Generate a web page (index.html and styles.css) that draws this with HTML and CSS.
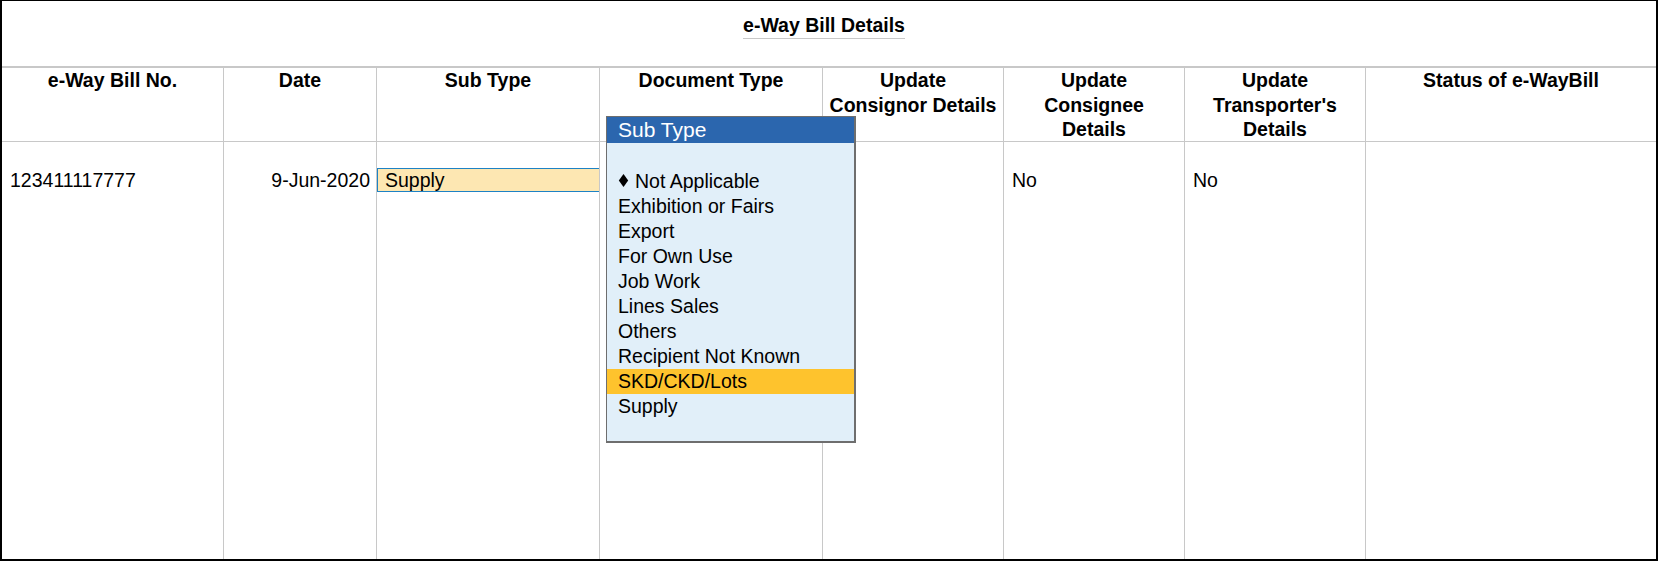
FILE: index.html
```html
<!DOCTYPE html>
<html lang="en">
<head>
    <meta charset="UTF-8">
    <title>e-Way Bill Details</title>
    <link rel="stylesheet" href="styles.css">
</head>
<body>

<div class="sheet">
    <div class="title-bar">
        <span class="title">e-Way Bill Details</span>
    </div>

    <div class="grid">
        <div class="head">e-Way Bill No.</div>
        <div class="head">Date</div>
        <div class="head">Sub Type</div>
        <div class="head">Document Type</div>
        <div class="head">Update<br>Consignor Details</div>
        <div class="head">Update<br>Consignee<br>Details</div>
        <div class="head">Update<br>Transporter's<br>Details</div>
        <div class="head last">Status of e-WayBill</div>

        <div class="cell">123411117777</div>
        <div class="cell right">9-Jun-2020</div>
        <div class="cell edit"><div class="field">Supply</div></div>
        <div class="cell"></div>
        <div class="cell"></div>
        <div class="cell">No</div>
        <div class="cell">No</div>
        <div class="cell last"></div>
    </div>

    <div class="picker">
        <div class="picker-title">Sub Type</div>
        <ul class="picker-list">
            <li><span class="mark"></span>Not Applicable</li>
            <li>Exhibition or Fairs</li>
            <li>Export</li>
            <li>For Own Use</li>
            <li>Job Work</li>
            <li>Lines Sales</li>
            <li>Others</li>
            <li>Recipient Not Known</li>
            <li class="selected">SKD/CKD/Lots</li>
            <li>Supply</li>
        </ul>
    </div>
</div>

</body>
</html>
```

FILE: styles.css
```css
body {
    margin: 0;
    padding: 0;
    font-family: "Liberation Sans", Arial, sans-serif;
    color: #000;
    background-color: #fff;
}

.sheet {
    position: relative;
    box-sizing: border-box;
    width: 1658px;
    height: 561px;
    border: 2px solid #000;
    border-top-width: 1px;
    display: flex;
    flex-direction: column;
}

.title-bar {
    height: 65px;
    padding-right: 10px;
    display: flex;
    justify-content: center;
    align-items: flex-start;
}

.title {
    margin-top: 12px;
    font-size: 19.5px;
    font-weight: bold;
    line-height: 25px;
    border-bottom: 1px solid #c8c8c8;
}

.grid {
    flex: 1;
    display: grid;
    grid-template-columns: 222px 153px 223px 223px 181px 181px 181px 1fr;
    grid-template-rows: 74px 1fr;
    border-top: 2px solid #c8c8c8;
    font-size: 19.5px;
    line-height: 25px;
}

.head {
    line-height: 24.5px;
    font-weight: bold;
    text-align: center;
    border-right: 1px solid #c8c8c8;
    border-bottom: 1px solid #c8c8c8;
}

.cell {
    padding: 26px 8px 0;
    border-right: 1px solid #c8c8c8;
}

.cell.right {
    text-align: right;
    padding-right: 6px;
}

.cell.edit {
    padding: 26px 0 0;
}

.head.last,
.cell.last {
    border-right: none;
}

.field {
    height: 22px;
    line-height: 22px;
    padding-left: 7px;
    background-color: #fde7b2;
    border: 1px solid #1d82c5;
    border-right: none;
}

.picker {
    position: absolute;
    left: 604px;
    top: 115px;
    width: 250px;
    height: 327px;
    box-sizing: border-box;
    background-color: #e1eff9;
    border: 1px solid #6e6e6e;
    border-right-width: 2px;
    border-bottom-width: 2px;
}

.picker-title {
    height: 26px;
    line-height: 26px;
    padding-left: 11px;
    font-size: 21px;
    color: #fff;
    background-color: #2b66ae;
}

.picker-list {
    list-style: none;
    margin: 0;
    padding: 25.5px 0 0;
    font-size: 19.5px;
    line-height: 25px;
}

.picker-list li {
    height: 25px;
    padding-left: 11px;
}

.picker-list .selected {
    background-color: #fec32d;
}

.mark {
    display: inline-block;
    width: 7px;
    height: 7px;
    margin: 0 8px 3px 2px;
    background-color: #000;
    transform: scale(0.95, 1.3) rotate(45deg);
    vertical-align: middle;
}
```
